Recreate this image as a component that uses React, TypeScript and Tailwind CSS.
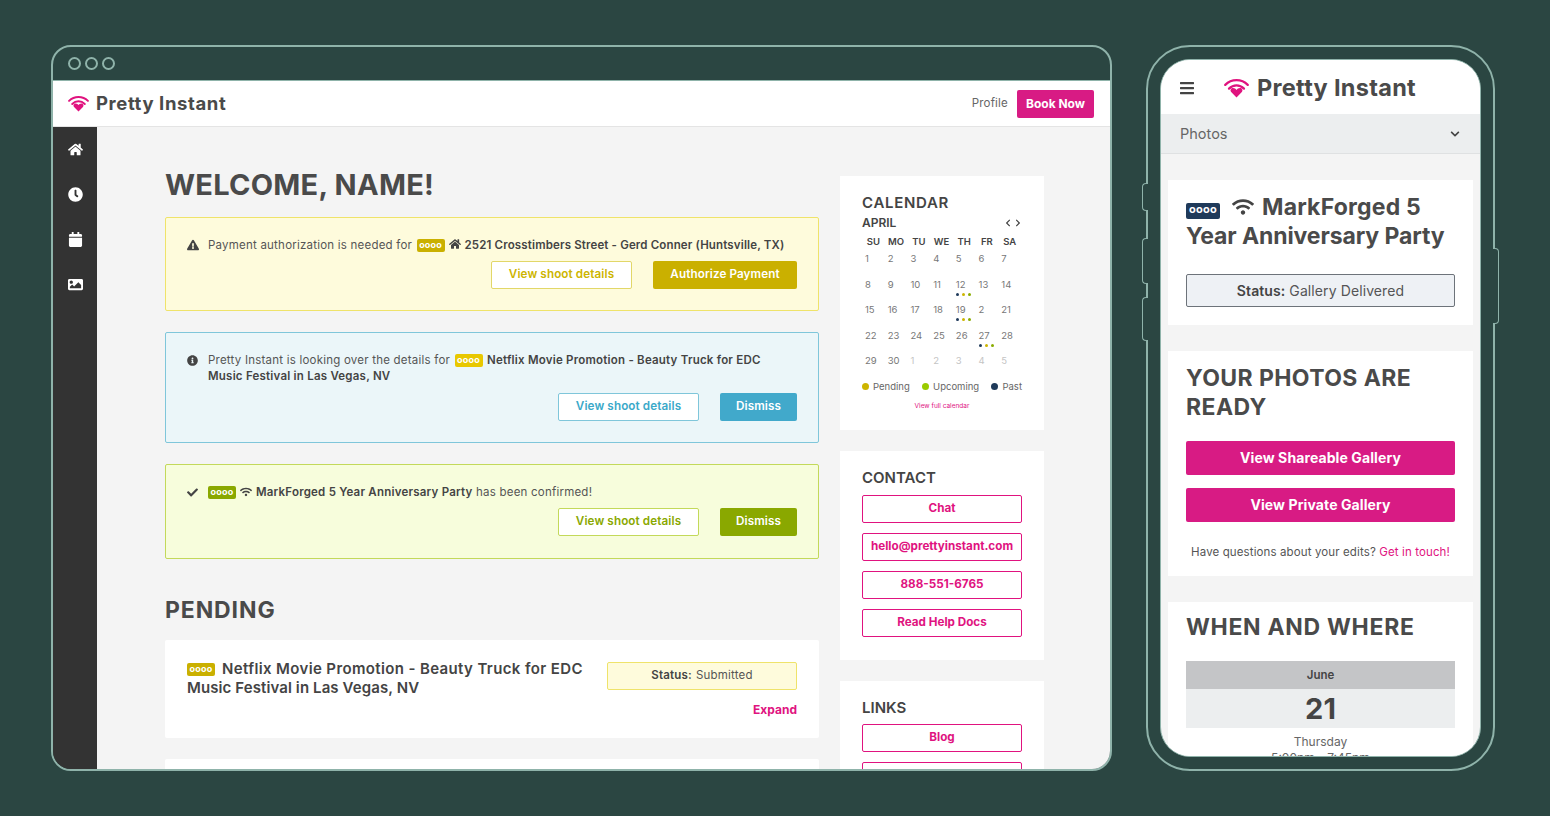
import React from "react";
import { FaHome, FaClock, FaCalendar, FaImage, FaExclamationTriangle, FaInfoCircle, FaCheck, FaWifi, FaBars, FaChevronDown, FaChevronLeft, FaChevronRight } from "react-icons/fa";

function Logo({ className }: { className: string }) {
  return (
    <svg viewBox="0 0 40 32" className={className} fill="none">
      <path d="M2 11 C12 1 28 1 38 11" stroke="#e0137f" strokeWidth="3.6" strokeLinecap="round" />
      <path d="M8 17 C15 10 25 10 32 17" stroke="#e0137f" strokeWidth="3.6" strokeLinecap="round" />
      <path d="M20 31 L11.5 22.5 C9 19.5 11.5 16 14.5 16 C17 16 19 17.5 20 19 C21 17.5 23 16 25.5 16 C28.5 16 31 19.5 28.5 22.5 Z" fill="#e0137f" />
    </svg>
  );
}

function Badge({ color, className = "" }: { color: string; className?: string }) {
  return (
    <span className={`inline-block text-center rounded-[2px] text-white font-bold text-[9px] leading-[11px] tracking-[0.2px] h-[13px] w-[28px] align-[1px] ${color} ${className}`}>
      oooo
    </span>
  );
}

function Btn({ className, children }: { className: string; children: React.ReactNode }) {
  return (
    <div className={`flex items-center justify-center h-[28px] rounded-[2px] text-[11.7px] font-semibold tracking-[0.1px] ${className}`}>
      {children}
    </div>
  );
}

function LinkBtn({ children }: { children: React.ReactNode }) {
  return (
    <div className="flex items-center justify-center h-[28px] w-[160px] shrink-0 bg-white border border-[#e0137f] rounded-[2px] text-[#e0137f] text-[11.7px] font-bold">
      {children}
    </div>
  );
}

const weeks: string[][] = [
  ["1", "2", "3", "4", "5", "6", "7"],
  ["8", "9", "10", "11", "12", "13", "14"],
  ["15", "16", "17", "18", "19", "2", "21"],
  ["22", "23", "24", "25", "26", "27", "28"],
  ["29", "30", "1", "2", "3", "4", "5"],
];
const dotted = new Set(["1-4", "2-4", "3-5"]);

function Calendar() {
  return (
    <div className="bg-white h-[254px] shrink-0 pt-[18px] pl-[22px] pr-[22px]">
      <div className="text-[15px] leading-[18px] font-semibold text-[#444] tracking-[0.7px]">CALENDAR</div>
      <div className="flex items-center justify-between mt-[3px] h-[15px]">
        <span className="text-[12px] font-semibold text-[#444]">APRIL</span>
        <span className="flex gap-[2px] text-[#444] text-[8px]"><FaChevronLeft /><FaChevronRight /></span>
      </div>
      <div className="grid grid-cols-7 w-[159px] mt-[6px] text-[9.5px] leading-[12px] font-semibold text-[#444] text-center">
        {["SU", "MO", "TU", "WE", "TH", "FR", "SA"].map((d) => <div key={d}>{d}</div>)}
      </div>
      <div className="w-[159px] mt-[5px]">
        {weeks.map((w, i) => (
          <div key={i} className="grid grid-cols-7 h-[25.6px] text-[9.5px] leading-[12px]">
            {w.map((d, j) => (
              <div key={j} className={`relative pl-[3px] ${i === 4 && j > 1 ? "text-[#c4c4c4]" : "text-[#777]"}`}>
                {d}
                {dotted.has(`${i}-${j}`) && (
                  <div className="absolute left-[3px] top-[14px] flex gap-[3px]">
                    <span className="w-[3px] h-[3px] rounded-full bg-[#1f3a5a]" />
                    <span className="w-[3px] h-[3px] rounded-full bg-[#cdb500]" />
                    <span className="w-[3px] h-[3px] rounded-full bg-[#8aac00]" />
                  </div>
                )}
              </div>
            ))}
          </div>
        ))}
      </div>
      <div className="flex items-center justify-between text-[9.5px] leading-[12px] text-[#666]">
        <span className="flex items-center gap-[4px]"><i className="w-[7px] h-[7px] rounded-full bg-[#cdb500]" />Pending</span>
        <span className="flex items-center gap-[4px]"><i className="w-[7px] h-[7px] rounded-full bg-[#9acb00]" />Upcoming</span>
        <span className="flex items-center gap-[4px]"><i className="w-[7px] h-[7px] rounded-full bg-[#1f3a5a]" />Past</span>
      </div>
      <div className="text-center text-[6.5px] text-[#e0137f] mt-[9px]">View full calendar</div>
    </div>
  );
}

function Alert({ className, icon, children, buttons }: { className: string; icon: React.ReactNode; children: React.ReactNode; buttons: React.ReactNode }) {
  return (
    <div className={`border rounded-[2px] shrink-0 pl-[21px] pr-[21px] ${className}`}>
      <div className="flex">
        <div className="w-[21px] shrink-0 text-[#444] text-[12px] pt-[2px]">{icon}</div>
        <div className="text-[11.5px] leading-[16px] text-[#555] tracking-[0.22px]">{children}</div>
      </div>
      <div className="flex justify-end gap-[21px]">{buttons}</div>
    </div>
  );
}

function Bump({ className }: { className: string }) {
  return <div className={`absolute w-[6px] border border-r-0 border-[#8fb3aa] bg-[#2b4642] rounded-l-[4px] ${className}`} />;
}

function BumpRight({ className }: { className: string }) {
  return <div className={`absolute w-[6px] border border-l-0 border-[#8fb3aa] bg-[#2b4642] rounded-r-[4px] ${className}`} />;
}

export default function App() {
  return (
    <div className="w-[1550px] h-[816px] bg-[#2b4642] overflow-hidden flex pt-[45px] pl-[51px] font-['Inter','Liberation_Sans',sans-serif]">
      {/* Browser */}
      <div className="w-[1061px] h-[726px] shrink-0 border-2 border-[#8fb3aa] rounded-[20px] overflow-hidden flex flex-col">
        <div className="h-[34px] shrink-0 flex items-center gap-[4px] pl-[15px] border-b border-[#8fb3aa]">
          <span className="w-[13px] h-[13px] rounded-full border-2 border-[#8fb3aa]" />
          <span className="w-[13px] h-[13px] rounded-full border-2 border-[#8fb3aa]" />
          <span className="w-[13px] h-[13px] rounded-full border-2 border-[#8fb3aa]" />
        </div>
        <div className="h-[46px] shrink-0 bg-white border-b border-[#e4e4e4] flex items-center pl-[15px] pr-[16px]">
          <Logo className="w-[21px] h-[17px]" />
          <span className="ml-[7px] text-[18.5px] font-bold text-[#4a4a4a] tracking-[0.6px]">Pretty Instant</span>
          <span className="ml-auto text-[11.5px] text-[#666] tracking-[0.2px] pt-[1px]">Profile</span>
          <div className="ml-[9px] w-[77px] h-[28px] bg-[#d81b84] rounded-[2px] text-white text-[12px] font-bold flex items-center justify-center">Book Now</div>
        </div>
        <div className="flex-1 flex min-h-0">
          <div className="w-[44px] shrink-0 bg-[#333333] flex flex-col items-center pt-[15px] gap-[30px] text-white text-[15px]">
            <FaHome />
            <FaClock />
            <FaCalendar />
            <FaImage />
          </div>
          <div className="flex-1 bg-[#f4f4f4] flex gap-[21px] pl-[68px] min-w-0 overflow-hidden">
            <div className="w-[654px] shrink-0 flex flex-col">
              <h1 className="mt-[41px] h-[34px] text-[29px] leading-[34px] font-bold text-[#4a4a4a] tracking-[0.25px] shrink-0">WELCOME, NAME!</h1>
              <div className="mt-[15px] flex flex-col gap-[21px]">
                <Alert
                  className="h-[94px] bg-[#fefbdc] border-[#efe36a] pt-[19px]"
                  icon={<FaExclamationTriangle />}
                  buttons={<>
                    <Btn className="w-[141px] bg-white border border-[#e2d768] text-[#cdb500]">View shoot details</Btn>
                    <Btn className="w-[144px] bg-[#cab000] text-white font-bold">Authorize Payment</Btn>
                  </>}
                >
                  <span className="whitespace-nowrap">Payment authorization is needed for <Badge color="bg-[#cab000]" className="mx-[1px]" /> <FaHome className="inline text-[#444] text-[12px] align-[-1px]" /> <b className="text-[#444] font-semibold tracking-[0.15px]">2521 Crosstimbers Street - Gerd Conner (Huntsville, TX)</b></span>
                  <div className="h-[8px]" />
                </Alert>
                <Alert
                  className="h-[111px] bg-[#ebf6f9] border-[#7fc6da] pt-[19px]"
                  icon={<FaInfoCircle className="text-[11px] mt-[1px]" />}
                  buttons={<>
                    <Btn className="w-[141px] bg-white border border-[#7fc6da] text-[#3ba9c9] mt-[9px]">View shoot details</Btn>
                    <Btn className="w-[77px] bg-[#41a9cb] text-white font-bold mt-[9px]">Dismiss</Btn>
                  </>}
                >
                  Pretty Instant is looking over the details for <Badge color="bg-[#e8c800]" className="mx-[1px]" /> <b className="text-[#444] font-semibold">Netflix Movie Promotion - Beauty Truck for EDC<br />Music Festival in Las Vegas, NV</b>
                </Alert>
                <Alert
                  className="h-[95px] bg-[#f7fddc] border-[#c3d95a] pt-[19px]"
                  icon={<FaCheck className="text-[11px] mt-[1px]" />}
                  buttons={<>
                    <Btn className="w-[141px] bg-white border border-[#c3d95a] text-[#8aa800] mt-[8px]">View shoot details</Btn>
                    <Btn className="w-[77px] bg-[#8aa800] text-white font-bold mt-[8px]">Dismiss</Btn>
                  </>}
                >
                  <Badge color="bg-[#8aa800]" className="mr-[1px]" /> <FaWifi className="inline text-[#444] text-[12px] align-[-2px]" /> <b className="text-[#444] font-semibold">MarkForged 5 Year Anniversary Party</b> has been confirmed!
                </Alert>
              </div>
              <h2 className="mt-[37px] h-[28px] text-[23px] leading-[28px] font-bold text-[#4a4a4a] tracking-[0.9px] shrink-0">PENDING</h2>
              <div className="mt-[16px] h-[98px] shrink-0 bg-white rounded-[2px] pt-[19px] pl-[22px] pr-[22px] flex justify-between">
                <div className="w-[405px] text-[15px] leading-[19px] font-semibold text-[#444] tracking-[0.37px]">
                  <Badge color="bg-[#cab000]" className="mr-[7px] align-[2px]" />Netflix Movie Promotion - Beauty Truck for EDC<br /><span className="tracking-[0.1px]">Music Festival in Las Vegas, NV</span>
                </div>
                <div className="w-[190px] flex flex-col items-end pt-[3px]">
                  <div className="w-[190px] h-[28px] bg-[#fefbdc] border border-[#efe36a] rounded-[2px] flex items-center justify-center text-[11.5px] text-[#555] tracking-[0.2px]">
                    <b className="font-semibold text-[#444] mr-[4px]">Status:</b> Submitted
                  </div>
                  <div className="mt-[11px] text-[12px] font-bold text-[#e0137f]">Expand</div>
                </div>
              </div>
              <div className="mt-[21px] h-[40px] shrink-0 bg-white rounded-[2px]" />
            </div>
            <div className="w-[204px] shrink-0 flex flex-col gap-[21px] pt-[49px]">
              <Calendar />
              <div className="bg-white h-[209px] shrink-0 pt-[18px] flex flex-col items-center">
                <div className="text-[15px] leading-[18px] font-semibold text-[#444] w-[160px]">CONTACT</div>
                <div className="mt-[8px] flex flex-col gap-[10px]">
                  <LinkBtn>Chat</LinkBtn>
                  <LinkBtn>hello@prettyinstant.com</LinkBtn>
                  <LinkBtn>888-551-6765</LinkBtn>
                  <LinkBtn>Read Help Docs</LinkBtn>
                </div>
              </div>
              <div className="bg-white h-[120px] shrink-0 pt-[18px] flex flex-col items-center">
                <div className="text-[15px] leading-[18px] font-semibold text-[#444] w-[160px]">LINKS</div>
                <div className="mt-[7px] flex flex-col gap-[10px]">
                  <LinkBtn>Blog</LinkBtn>
                  <LinkBtn>Help</LinkBtn>
                </div>
              </div>
            </div>
          </div>
        </div>
      </div>

      {/* Phone */}
      <div className="relative ml-[34px] w-[349px] h-[726px] shrink-0">
        <div className="relative w-full h-full border-2 border-[#8fb3aa] bg-[#2b4642] rounded-[44px] p-[12px]">
          <div className="w-full h-full rounded-[30px] overflow-hidden bg-[#f4f4f4] border border-[#8fb3aa] flex flex-col">
            <div className="h-[54px] shrink-0 bg-white flex items-center pl-[18px] pt-[2px]">
              <FaBars className="text-[#444] text-[16px]" />
              <Logo className="ml-[29px] w-[25px] h-[20px]" />
              <span className="ml-[8px] text-[23.5px] font-bold text-[#4a4a4a] tracking-[0.3px]">Pretty Instant</span>
            </div>
            <div className="h-[40px] shrink-0 bg-[#eceeef] border-b border-[#dfe1e2] flex items-center justify-between pl-[19px] pr-[20px] text-[14.5px] text-[#666]">
              Photos
              <FaChevronDown className="text-[#444] text-[10px]" />
            </div>
            <div className="flex flex-col gap-[26px] px-[7px] pt-[26px]">
              <div className="bg-white h-[145px] shrink-0 px-[18px] pt-[13px]">
                <div className="text-[23px] leading-[29px] font-bold text-[#4a4a4a]">
                  <span className="inline-block text-center w-[34px] h-[16px] rounded-[2px] bg-[#1f3a5a] text-white text-[11px] leading-[13px] font-bold tracking-[0.3px] align-[2px]">oooo</span>
                  <FaWifi className="inline text-[#444] text-[22px] ml-[12px] mr-[8px] align-[-3px]" />
                  <span className="tracking-[0.2px]">MarkForged 5</span> <span className="tracking-[-0.1px]">Year Anniversary Party</span>
                </div>
                <div className="mt-[23px] h-[33px] bg-[#eef1f5] border border-[#6d737a] rounded-[2px] flex items-center justify-center text-[14px] text-[#555] tracking-[0.1px] pb-[1px]">
                  <b className="font-semibold text-[#444] mr-[4px]">Status:</b> Gallery Delivered
                </div>
              </div>
              <div className="bg-white h-[225px] shrink-0 px-[18px] pt-[13px]">
                <div className="text-[23px] leading-[29px] font-bold text-[#4a4a4a] tracking-[0.4px]">YOUR PHOTOS ARE READY</div>
                <div className="mt-[19px] h-[34px] pb-[1px] bg-[#d81b84] rounded-[2px] text-white text-[14px] font-bold tracking-[0.1px] flex items-center justify-center">View Shareable Gallery</div>
                <div className="mt-[13px] h-[34px] pb-[1px] bg-[#d81b84] rounded-[2px] text-white text-[14px] font-bold tracking-[0.1px] flex items-center justify-center">View Private Gallery</div>
                <div className="mt-[22px] text-center text-[11.5px] text-[#555] tracking-[0.12px] whitespace-nowrap">Have questions about your edits? <span className="text-[#e0137f]">Get in touch!</span></div>
              </div>
              <div className="bg-white h-[200px] shrink-0 px-[18px] pt-[11px]">
                <div className="text-[23px] leading-[29px] font-bold text-[#4a4a4a] tracking-[0.7px]">WHEN AND WHERE</div>
                <div className="mt-[19px] h-[28px] pt-[1px] bg-[#c4c5c7] flex items-center justify-center text-[11.5px] font-semibold text-[#444]">June</div>
                <div className="h-[39px] bg-[#eceeef] flex items-center justify-center text-[29px] font-bold text-[#444]">21</div>
                <div className="mt-[6px] text-center text-[12px] leading-[16px] text-[#666]">Thursday</div>
                <div className="text-center text-[12px] leading-[16px] text-[#666]">5:00pm - 7:45pm</div>
              </div>
            </div>
          </div>
        </div>
        <Bump className="-left-[4px] top-[138px] h-[28px]" />
        <Bump className="-left-[4px] top-[193px] h-[46px]" />
        <Bump className="-left-[4px] top-[252px] h-[44px]" />
        <BumpRight className="-right-[4px] top-[203px] h-[76px]" />
      </div>
    </div>
  );
}
